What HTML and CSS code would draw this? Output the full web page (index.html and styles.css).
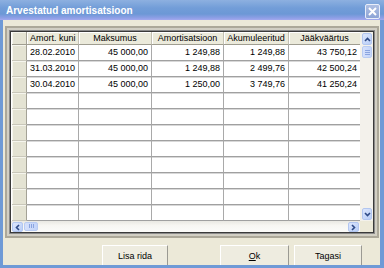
FILE: index.html
```html
<!DOCTYPE html>
<html>
	<head>
		<title>Arvestatud amortisatsioon</title>
		<link rel="stylesheet" href="styles.css">
	</head>
	<body>
		<div class="window">
			<div class="titlebar">
				<span class="title">Arvestatud amortisatsioon</span>
				<span class="close">
					<svg width="9" height="9" viewBox="0 0 9 9"><path d="M1 1L8 8M8 1L1 8" stroke="#fff" stroke-width="2"/></svg>
				</span>
			</div>
			<div class="content">
				<div class="grid-frame">
					<div class="grid-bevel">
						<div class="grid-view">
							<div class="table">
								<div class="row head">
									<div class="rh"></div>
									<div class="c">Amort. kuni</div>
									<div class="c">Maksumus</div>
									<div class="c">Amortisatsioon</div>
									<div class="c">Akumuleeritud</div>
									<div class="c">Jääkväärtus</div>
								</div>
								<div class="row">
									<div class="rh"></div>
									<div class="c date">28.02.2010</div>
									<div class="c">45 000,00</div>
									<div class="c">1 249,88</div>
									<div class="c">1 249,88</div>
									<div class="c">43 750,12</div>
								</div>
								<div class="row">
									<div class="rh"></div>
									<div class="c date">31.03.2010</div>
									<div class="c">45 000,00</div>
									<div class="c">1 249,88</div>
									<div class="c">2 499,76</div>
									<div class="c">42 500,24</div>
								</div>
								<div class="row">
									<div class="rh"></div>
									<div class="c date">30.04.2010</div>
									<div class="c">45 000,00</div>
									<div class="c">1 250,00</div>
									<div class="c">3 749,76</div>
									<div class="c">41 250,24</div>
								</div>
								<div class="row"><div class="rh"></div><div class="c"></div><div class="c"></div><div class="c"></div><div class="c"></div><div class="c"></div></div>
								<div class="row"><div class="rh"></div><div class="c"></div><div class="c"></div><div class="c"></div><div class="c"></div><div class="c"></div></div>
								<div class="row"><div class="rh"></div><div class="c"></div><div class="c"></div><div class="c"></div><div class="c"></div><div class="c"></div></div>
								<div class="row"><div class="rh"></div><div class="c"></div><div class="c"></div><div class="c"></div><div class="c"></div><div class="c"></div></div>
								<div class="row"><div class="rh"></div><div class="c"></div><div class="c"></div><div class="c"></div><div class="c"></div><div class="c"></div></div>
								<div class="row"><div class="rh"></div><div class="c"></div><div class="c"></div><div class="c"></div><div class="c"></div><div class="c"></div></div>
								<div class="row"><div class="rh"></div><div class="c"></div><div class="c"></div><div class="c"></div><div class="c"></div><div class="c"></div></div>
								<div class="row"><div class="rh"></div><div class="c"></div><div class="c"></div><div class="c"></div><div class="c"></div><div class="c"></div></div>
							</div>
							<div class="vscroll">
								<span class="arrow">
									<svg width="7" height="5" viewBox="0 0 7 5"><path d="M1 4L3.5 1.5L6 4" fill="none" stroke="#2e4a86" stroke-width="1.6"/></svg>
								</span>
								<span class="thumb vthumb"><i></i><i></i><i></i></span>
								<span class="track"></span>
								<span class="arrow">
									<svg width="7" height="5" viewBox="0 0 7 5"><path d="M1 1L3.5 3.5L6 1" fill="none" stroke="#2e4a86" stroke-width="1.6"/></svg>
								</span>
							</div>
							<div class="hscroll">
								<span class="arrow">
									<svg width="5" height="7" viewBox="0 0 5 7"><path d="M4 1L1.5 3.5L4 6" fill="none" stroke="#2e4a86" stroke-width="1.6"/></svg>
								</span>
								<span class="thumb hthumb"><i></i><i></i><i></i></span>
								<span class="track"></span>
								<span class="arrow">
									<svg width="5" height="7" viewBox="0 0 5 7"><path d="M1 1L3.5 3.5L1 6" fill="none" stroke="#2e4a86" stroke-width="1.6"/></svg>
								</span>
							</div>
							<div class="corner"></div>
						</div>
					</div>
				</div>
				<div class="buttons">
					<button class="btn btn-add">Lisa rida</button>
					<button class="btn btn-ok"><u>O</u>k</button>
					<button class="btn btn-back">Tagasi</button>
				</div>
			</div>
		</div>
	</body>
</html>
```

FILE: styles.css
```css
html, body {
	margin: 0;
}
body {
	width: 384px;
	height: 268px;
	overflow: hidden;
	font-family: "Liberation Sans", Arial, sans-serif;
	font-size: 9px;
	color: #000;
}

.window {
	display: flex;
	flex-direction: column;
	height: 268px;
	background: #6f9ad6;
}

.titlebar {
	display: flex;
	align-items: center;
	justify-content: space-between;
	height: 20px;
	padding: 0 6px 0 6px;
	background: linear-gradient(#8db0e0 0%, #729dd8 40%, #6c98d6 70%, #8e9fe6 90%, #a4a9ee 100%);
}
.title {
	color: #fff;
	font-weight: bold;
	font-size: 10px;
	margin-top: 1px;
}
.close {
	display: flex;
	align-items: center;
	justify-content: center;
	width: 13px;
	height: 13px;
	margin-top: 3px;
	margin-right: -2px;
	border: 1px solid #e8eefa;
	border-radius: 2px;
	background: linear-gradient(#aebfe2, #8da4d6);
}

.content {
	flex: 1;
	display: flex;
	flex-direction: column;
	margin: 0 4px 3px 3px;
	background: #ece9d8;
}

.grid-frame {
	margin: 6px 1px 0 2px;
	border: 2px solid #aca899;
	padding: 2px;
	background: #d2cfc4;
}
.grid-bevel {
	border: 1px solid #8a8a8a;
}
.grid-view {
	display: grid;
	grid-template-columns: 1fr 13px;
	grid-template-rows: 189px 11px;
	border: 1px solid #3a3a3a;
	background: #fff;
}

.table {
	overflow: hidden;
	padding-left: 1px;
}
.row {
	display: grid;
	grid-template-columns: 15px 52px 73px 72px 65px 72px;
	height: 16px;
}
.c {
	border-right: 1px solid #a9a9a9;
	border-bottom: 1px solid #a0a0a0;
	box-shadow: 0 1px 0 #d8d8d8;
	padding: 0 3px;
	line-height: 15px;
	text-align: right;
	white-space: nowrap;
	overflow: hidden;
}
.c.date {
	text-align: left;
}
.rh {
	background: #e4e3d3;
	border-bottom: 1px solid #c9c7ba;
	border-right: 1px solid #a4a296;
	box-shadow: inset 1px 1px 0 #f6f6ee;
}

.head {
	height: 13px;
}
.head .c {
	background: #ebeadb;
	border-right: 1px solid #c3c1b4;
	border-bottom: 1px solid #9f9d90;
	box-shadow: inset 1px 1px 0 #fff;
	text-align: center;
	line-height: 12px;
}
.head .rh {
	border-bottom-color: #9f9d90;
}

.vscroll {
	display: flex;
	flex-direction: column;
	padding: 1px 1px 1px 2px;
	background: #f3f1eb;
}
.hscroll {
	display: flex;
	padding: 1px 1px 0 1px;
	background: linear-gradient(#e9e8e2 0, #f7f6f2 40%, #fbfbf9 100%);
}
.corner {
	background: #ece9d8;
}
.track {
	flex: 1;
}
.arrow {
	display: flex;
	align-items: center;
	justify-content: center;
	width: 10px;
	height: 10px;
	border: 1px solid #b2c6f0;
	border-radius: 2px;
	background: linear-gradient(135deg, #dde7fd, #b8cdf7);
	box-sizing: border-box;
}
.vscroll .arrow {
	height: 12px;
}
.hscroll .arrow {
	width: 11px;
}
.thumb {
	display: flex;
	align-items: center;
	justify-content: center;
	gap: 1px;
	border: 1px solid #b8cbf2;
	border-radius: 2px;
	background: linear-gradient(90deg, #d5e0fb, #c3d4f9);
	box-sizing: border-box;
}
.vthumb {
	flex-direction: column;
	height: 12px;
	margin-top: 1px;
}
.vthumb i {
	width: 5px;
	height: 1px;
	background: #8aa4df;
}
.hthumb {
	width: 14px;
	margin-left: 1px;
	margin-bottom: 1px;
	align-items: flex-end;
	padding-bottom: 2px;
}
.hthumb i {
	width: 1px;
	height: 4px;
	background: #8aa4df;
}

.buttons {
	display: flex;
	align-items: flex-end;
	flex: 1;
	padding: 0 18px 0 99px;
}
.btn {
	height: 20px;
	padding: 1px 0 0 0;
	border: none;
	border-top: 1px solid #fff;
	border-left: 1px solid #fff;
	border-right: 1px solid #9b9a93;
	background: #eeece0;
	font-family: "Liberation Sans", Arial, sans-serif;
	font-size: 9px;
	color: #000;
}
.btn-add {
	width: 66px;
}
.btn-ok {
	width: 69px;
	margin-left: auto;
}
.btn-back {
	width: 68px;
	margin-left: 5px;
}
```
